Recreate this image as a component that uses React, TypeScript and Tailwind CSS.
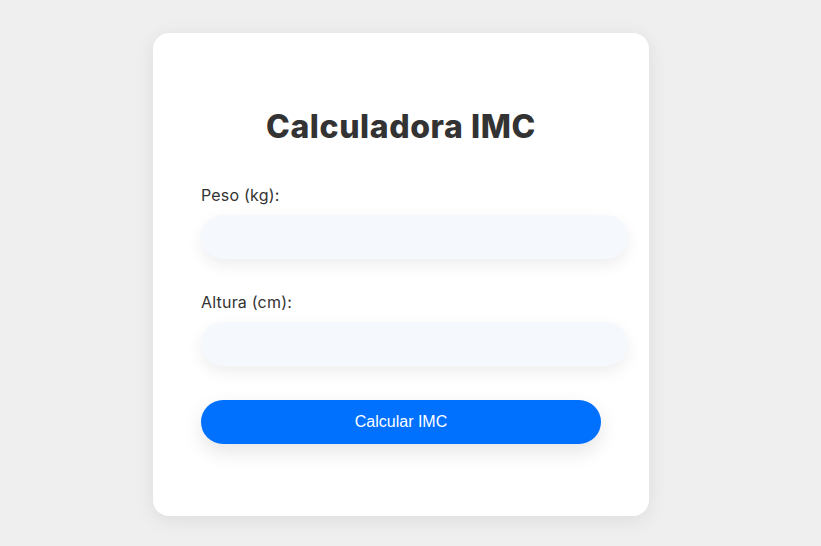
import React, { useState } from 'react';

export default function App() {
    const [peso, setPeso] = useState('');
    const [altura, setAltura] = useState('');

    return (
        <div
            className="flex min-h-screen items-center justify-center bg-[#efefef] pr-[19px]"
            style={{ fontFamily: 'Inter, "Noto Sans", sans-serif' }}
        >
            <div className="mt-[2px] w-[496px] rounded-2xl bg-white px-12 pt-[70px] pb-[72px] shadow-[0_4px_20px_rgba(0,0,0,0.08)]">
                <h1 className="text-center text-[32px] leading-[48px] font-extrabold tracking-[0.6px] text-[#333]">
                    Calculadora IMC
                </h1>

                <form onSubmit={(e) => e.preventDefault()} className="mt-8">
                    <label className="block text-base leading-6 tracking-[0.2px] text-[#333]">
                        Peso (kg):
                    </label>
                    <input
                        type="number"
                        value={peso}
                        onChange={(e) => setPeso(e.target.value)}
                        className="mt-2 block h-11 w-[427px] rounded-full bg-[#f5f8fc] px-4 shadow-[0_6px_16px_rgba(0,0,0,0.07)] outline-none"
                    />

                    <label className="mt-[31px] block text-base leading-6 tracking-[0.2px] text-[#333]">
                        Altura (cm):
                    </label>
                    <input
                        type="number"
                        value={altura}
                        onChange={(e) => setAltura(e.target.value)}
                        className="mt-2 block h-11 w-[427px] rounded-full bg-[#f5f8fc] px-4 shadow-[0_6px_16px_rgba(0,0,0,0.07)] outline-none"
                    />

                    <button
                        type="submit"
                        className="mt-[34px] block h-11 w-full rounded-full bg-[#0070ff] text-base text-white shadow-[0_8px_20px_rgba(0,0,0,0.1)]"
                        style={{ fontFamily: '"Liberation Sans", Arial, sans-serif' }}
                    >
                        Calcular IMC
                    </button>
                </form>
            </div>
        </div>
    );
}
